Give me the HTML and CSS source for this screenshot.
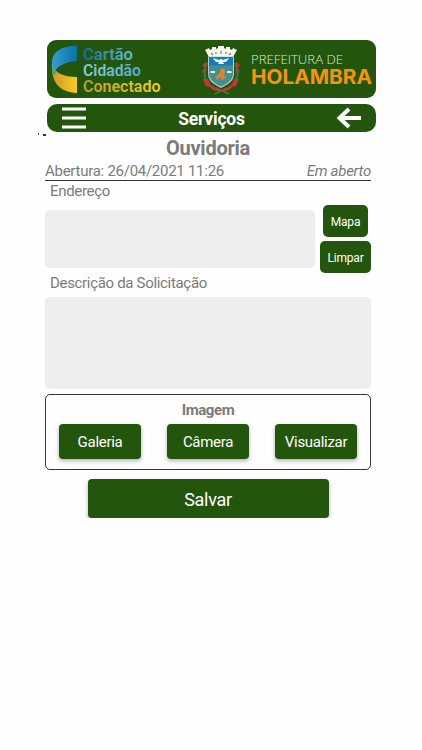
FILE: index.html
```
<!DOCTYPE html>
<html lang="pt-BR">
<head>
  <meta charset="UTF-8">
  <meta name="viewport" content="width=device-width, initial-scale=1.0">
  <title>Ouvidoria</title>
  <link rel="stylesheet" href="styles.css">
</head>
<body>
  <header class="banner">
    <svg class="logo-cartao" width="114" height="58" viewBox="0 0 114 58">
      <defs>
        <linearGradient id="blue" x1="0" y1="0" x2="1" y2="0">
          <stop offset="0" stop-color="#3b9ccb"/>
          <stop offset="1" stop-color="#0870ae"/>
        </linearGradient>
        <linearGradient id="gold" x1="0" y1="0" x2="1" y2="0">
          <stop offset="0" stop-color="#c99a2b"/>
          <stop offset="1" stop-color="#fccb1e"/>
        </linearGradient>
        <linearGradient id="t1"><stop offset="0" stop-color="#0d6da3"/><stop offset="1" stop-color="#69bbd4"/></linearGradient>
        <linearGradient id="t2"><stop offset="0" stop-color="#86cbd4"/><stop offset="1" stop-color="#55a9d0"/></linearGradient>
        <linearGradient id="t3"><stop offset="0" stop-color="#b99c2c"/><stop offset="1" stop-color="#f3cf25"/></linearGradient>
      </defs>
      <path d="M30 5.500C14 6 5 12 5 22C4.500 26 5 30 7 33C9 27 17 22 30 21Z" fill="url(#blue)"/>
      <path d="M5 24C4 42 12 52 30 53V37C17 37 7 33 5 24Z" fill="url(#gold)"/>
      <path d="M5 23C5 27 6.500 30 10 32L7 35C5 31 4.500 27 5 23Z" fill="#35a797"/>
      <g class="logo-text">
        <text x="36" y="19.500" textLength="50" lengthAdjust="spacingAndGlyphs" fill="url(#t1)">Cartão</text>
        <text x="36" y="35.500" textLength="58" lengthAdjust="spacingAndGlyphs" fill="url(#t2)">Cidadão</text>
        <text x="36" y="51.500" textLength="77.500" lengthAdjust="spacingAndGlyphs" fill="url(#t3)">Conectado</text>
      </g>
    </svg>
    <svg class="brasao" width="40" height="50" viewBox="0 0 40 50">
      <path d="M6 18C2 26 3 33 7 40M34 18C38 26 37 33 33 40" fill="none" stroke="#2f7d3c" stroke-width="2.500"/>
      <path d="M14 49L26 43M28 49L15 43" stroke="#3b9b55" stroke-width="1.300"/>
      <path d="M2 34L7 34L9 39L15 43L20 45L26 43L31 39L33 34L38 34L35 41L31 42L28 45L20 47L12 45L9 42L5 41Z" fill="#c9343b"/>
      <path d="M2 21L6 18M2 27L5 24M35 18L38 21M35 24L38 27" stroke="#c9343b" stroke-width="2.500"/>
      <path d="M4 5L8 3L9 5L11 4V2H15V4L17 3V1H23V3L25 4V2H29V4L31 5L32 3L36 5L32 12H8Z" fill="#f7f7f2"/>
      <path d="M10 8L12 10M15 7V9M20 6V9M25 7V9M30 8L28 10" stroke="#72806a" stroke-width="1.200"/>
      <path d="M7 11.500H33V28C33 36 28 39 20 43C12 39 7 36 7 28Z" fill="#b8ccc4"/>
      <path d="M8 12H32V28C32 35 27 38 20 41.500C13 38 8 35 8 28Z" fill="#43918f"/>
      <path d="M8 12H32V20.500H8Z" fill="#177bc0"/>
      <path d="M12 13L18 15L20 14L22 15L28 13L25 17L22 17L23 19H17L18 17L15 17Z" fill="#fff"/>
      <path d="M9.500 27H14M26 27H30.500" stroke="#d8eff5" stroke-width="1.800"/>
      <path d="M20 24L23 23L24 27L23 30L25 33L21 35L19 32L16 35L14 32L18 29Z" fill="#dc8430"/>
    </svg>
    <svg class="prefeitura" width="122" height="36" viewBox="0 0 122 36">
      <text class="pref-light" x="0" y="13" textLength="92" lengthAdjust="spacingAndGlyphs">PREFEITURA DE</text>
      <text class="pref-bold" x="0" y="32.500" textLength="121" lengthAdjust="spacingAndGlyphs">HOLAMBRA</text>
    </svg>
  </header>

  <nav class="navbar">
    <svg width="26" height="24" viewBox="0 0 26 24">
      <path d="M1 3H25M1 12H25M1 21H25" stroke="#fff" stroke-width="3"/>
    </svg>
    <span class="nav-title">Serviços</span>
    <svg width="26" height="22" viewBox="0 0 26 22">
      <path d="M25 11H4M13 2L3.500 11L13 20" fill="none" stroke="#fff" stroke-width="4"/>
    </svg>
    <i class="dot"></i>
    <i class="dot dot-wide"></i>
  </nav>

  <main>
    <h1>Ouvidoria</h1>
    <div class="status">
      <span class="opened">Abertura: 26/04/2021 11:26</span>
      <em>Em aberto</em>
    </div>

    <label class="label-address" for="endereco">Endereço</label>
    <div class="address">
      <textarea id="endereco"></textarea>
      <div class="address-buttons">
        <button class="btn btn-map">Mapa</button>
        <button class="btn btn-clear">Limpar</button>
      </div>
    </div>

    <label class="label-desc" for="descricao">Descrição da Solicitação</label>
    <textarea id="descricao"></textarea>

    <section class="images">
      <h2>Imagem</h2>
      <div class="image-buttons">
        <button class="btn">Galeria</button>
        <button class="btn">Câmera</button>
        <button class="btn">Visualizar</button>
      </div>
    </section>

    <button class="btn btn-save">Salvar</button>
  </main>
</body>
</html>
```

FILE: styles.css
```
* {
  box-sizing: border-box;
}

body {
  font-family: Roboto, sans-serif;
  margin: 0;
  padding: 40px 46px 0 47px;
  background-color: #fefefe;
  color: #7b7b7b;
}

svg {
  display: block;
  flex: none;
}

.banner {
  display: flex;
  height: 58px;
  background-color: #23560c;
  border-radius: 9px;
}

.logo-text {
  font-size: 17px;
  font-weight: 600;
}

.brasao {
  margin: 5px 0 0 40px;
}

.prefeitura {
  margin: 11px 0 0 10px;
}

.pref-light {
  font-family: "Open Sans", sans-serif;
  font-size: 13.5px;
  font-weight: 300;
  fill: #dce8d6;
}

.pref-bold {
  font-family: Inter, sans-serif;
  font-size: 20px;
  font-weight: bold;
  fill: #f7930d;
}

.navbar {
  position: relative;
  display: flex;
  align-items: center;
  justify-content: space-between;
  height: 28px;
  margin-top: 6px;
  padding: 0 14px;
  background-color: #23560c;
  border-radius: 10px;
}

.nav-title {
  padding-top: 2px;
  color: white;
  font-size: 17.5px;
  font-weight: bold;
  letter-spacing: -0.2px;
}

/* small marks under the menu corner */
.dot {
  position: absolute;
  left: -9px;
  top: 29px;
  width: 1px;
  height: 2px;
  background-color: #8b4552;
}

.dot-wide {
  left: -4px;
  top: 30px;
  width: 3px;
  background-color: #6b1525;
}

main {
  margin: 0 5px 0 -2px;
}

h1 {
  margin: 4px 0 0;
  height: 24px;
  line-height: 24px;
  font-size: 20px;
  letter-spacing: -0.25px;
  text-align: center;
}

.status {
  display: flex;
  justify-content: space-between;
  height: 21px;
  line-height: 22px;
  font-size: 15px;
  letter-spacing: -0.27px;
  border-bottom: 1px solid #333;
}

label {
  display: block;
  height: 20px;
  line-height: 21px;
  padding-left: 5px;
  font-size: 15px;
  letter-spacing: -0.32px;
}

.address {
  display: flex;
  justify-content: space-between;
  margin-top: 4px;
}

textarea {
  display: block;
  width: 100%;
  height: 92px;
  border: none;
  border-radius: 5px;
  background-color: #ededed;
  resize: none;
}

.address textarea {
  width: 270px;
  height: 58px;
  margin-top: 5px;
}

.address-buttons {
  display: flex;
  flex-direction: column;
  align-items: center;
  gap: 4px;
  width: 51px;
}

.btn {
  font-family: inherit;
  font-size: 15px;
  letter-spacing: -0.3px;
  height: 35px;
  padding: 1px 0 0;
  border: none;
  border-radius: 4px;
  background-color: #23560c;
  color: white;
  box-shadow: 0 2px 4px rgba(0, 0, 0, 0.3);
}

.btn-map, .btn-clear {
  width: 45px;
  height: 32px;
  font-size: 12px;
  letter-spacing: -0.2px;
  border-radius: 5px;
  box-shadow: none;
}

.btn-clear {
  width: 51px;
}

.label-desc {
  height: 24px;
}

.images {
  height: 76px;
  margin-top: 5px;
  padding: 6px 13px;
  border: 1px solid #333;
  border-radius: 5px;
}

h2 {
  margin: 0;
  height: 23px;
  line-height: 19px;
  font-size: 15px;
  letter-spacing: -0.4px;
  text-align: center;
}

.image-buttons {
  display: flex;
  justify-content: space-between;
}

.image-buttons .btn {
  width: 82px;
}

.btn-save {
  display: block;
  width: 241px;
  height: 39px;
  margin: 9px auto 0;
  font-size: 18px;
}
```
